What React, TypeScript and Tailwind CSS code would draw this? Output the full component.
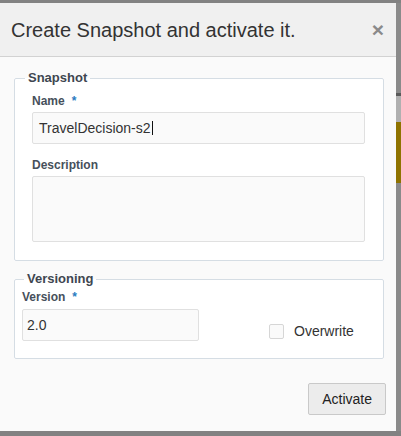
import { useState } from "react";

export default function App() {
  const [name] = useState("TravelDecision-s2");
  const [version] = useState("2.0");
  const [overwrite, setOverwrite] = useState(false);

  return (
    <div className="w-[401px] h-[436px] bg-[#828282] flex flex-col font-['Liberation_Sans',Arial,sans-serif] overflow-hidden">
      {/* backdrop edge */}
      <div className="h-[3px] shrink-0" />
      <div className="flex h-[428px] shrink-0">
        {/* dialog */}
        <div className="w-[396px] flex flex-col bg-[#fafafa]">
          <div className="h-[54px] shrink-0 flex items-center justify-between pl-[11px] pr-[12px] bg-[#f0f0f0] border-b border-[#d2d2d2]">
            <h1 className="text-[20px] leading-[24px] text-[#333]">Create Snapshot and activate it.</h1>
            <button className="text-[21px] leading-[21px] font-bold text-[#8a8a8a]">×</button>
          </div>

          <div className="flex-1 flex flex-col px-[14px] pr-[12px]">
            {/* Snapshot */}
            <fieldset className="mt-[13px] border border-[#d5dde4] rounded-[2px] bg-white px-[10px] pt-[8px] pb-[18px]">
              <legend className="px-[3px] text-[13px] leading-[16px] font-bold text-[#3e4650]">Snapshot</legend>
              <div className="pl-[7px] pr-[8px]">
                <label className="block text-[12px] leading-[15px] font-bold text-[#46505b]">
                  Name<span className="ml-[7px] text-[#2a7bbf]">*</span>
                </label>
                <div className="mt-[3px] h-[32px] flex items-center pl-[6px] bg-[#fafafa] border border-[#e0e0e0] rounded-[2px] text-[14px] text-[#333]">
                  <span>{name}</span>
                  <span className="ml-px w-px h-[14px] bg-[#111]" />
                </div>
                <label className="block mt-[14px] text-[12px] leading-[15px] font-bold text-[#46505b]">Description</label>
                <div className="mt-[3px] h-[66px] bg-[#fafafa] border border-[#e0e0e0] rounded-[2px]" />
              </div>
            </fieldset>

            {/* Versioning */}
            <fieldset className="mt-[10px] border border-[#d5dde4] rounded-[2px] bg-white pl-[7px] pt-[3px] pb-[17px]">
              <legend className="ml-[2px] px-[3px] text-[13px] leading-[16px] font-bold text-[#3e4650]">Versioning</legend>
              <div className="flex items-start">
                <div className="w-[177px]">
                  <label className="block text-[12px] leading-[15px] font-bold text-[#46505b]">
                    Version<span className="ml-[7px] text-[#2a7bbf]">*</span>
                  </label>
                  <div className="mt-[4px] h-[32px] flex items-center pl-[4px] bg-[#fafafa] border border-[#e0e0e0] rounded-[2px] text-[14px] text-[#333]">
                    {version}
                  </div>
                </div>
                <label className="ml-[70px] mt-[33px] flex items-center cursor-pointer" onClick={() => setOverwrite(!overwrite)}>
                  <span className="w-[15px] h-[15px] border border-[#d6d6d6] rounded-[2px] bg-[#fafafa]" />
                  <span className="ml-[10px] text-[14px] leading-[16px] text-[#333]">Overwrite</span>
                </label>
              </div>
            </fieldset>

            <div className="mt-[24px] flex justify-end pr-[-2px]">
              <button className="h-[32px] px-[13px] mr-[-2px] bg-[#ececec] border border-[#c9c9c9] rounded-[2px] text-[14px] text-[#222]">
                Activate
              </button>
            </div>
          </div>
        </div>

        {/* page behind the dialog */}
        <div className="w-[5px] flex flex-col">
          <div className="h-[90px] bg-[#8a8a8a]" />
          <div className="h-[3px] bg-[#5a5a5a]" />
          <div className="h-[26px] bg-[#b0b0b0]" />
          <div className="h-[61px] bg-[#8f7300]" />
          <div className="flex-1 bg-[#8a8a8a]" />
        </div>
      </div>
      <div className="flex-1" />
    </div>
  );
}
